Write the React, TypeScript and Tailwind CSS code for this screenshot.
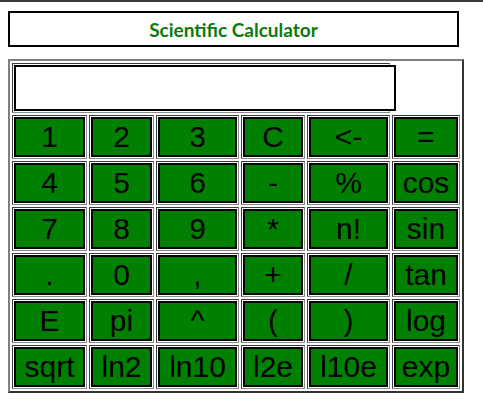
import React from "react";

const rows: string[][] = [
  ["1", "2", "3", "C", "<-", "="],
  ["4", "5", "6", "-", "%", "cos"],
  ["7", "8", "9", "*", "n!", "sin"],
  [".", "0", ",", "+", "/", "tan"],
  ["E", "pi", "^", "(", ")", "log"],
  ["sqrt", "ln2", "ln10", "l2e", "l10e", "exp"],
];

function Cell({ children, className = "" }: { children: React.ReactNode; className?: string }) {
  return (
    <div
      className={
        "border border-t-[#3a3a3a] border-l-[#3a3a3a] border-r-[#8a8a8a] border-b-[#8a8a8a] p-px " +
        className
      }
    >
      {children}
    </div>
  );
}

export default function App() {
  return (
    <div className="w-[483px] min-h-[411px] bg-white">
      <div className="h-[2px] bg-[#3c3c3c]" />
      <div className="pl-2 pt-[9px]">
        <div
          className="w-[451px] h-[36px] border-2 border-black flex items-center justify-center pt-[2px] font-bold text-[19px] text-[#0b7a0b]"
          style={{ fontFamily: "Lato, 'Open Sans', sans-serif" }}
        >
          Scientific Calculator
        </div>
        <div className="mt-3 w-[456px] border-2 border-t-[#808080] border-l-[#808080] border-r-[#333333] border-b-[#333333] p-[2px]">
          <div
            className="grid grid-cols-[75px_65px_83px_64px_83px_68px] gap-[2px]"
            style={{ fontFamily: "'Liberation Sans', Arial, sans-serif" }}
          >
            <Cell className="col-span-5 h-[50px] overflow-visible">
              <div className="w-[382px] h-[46px] border-2 border-black bg-white" />
            </Cell>
            <div />
            {rows.map((r, i) =>
              r.map((label, j) => (
                <Cell key={i + "-" + j} className="h-[44px]">
                  <div className="w-full h-full border-2 border-black bg-[#008000] flex items-center justify-center text-[30px] leading-none text-black">
                    {label}
                  </div>
                </Cell>
              ))
            )}
          </div>
        </div>
      </div>
    </div>
  );
}
